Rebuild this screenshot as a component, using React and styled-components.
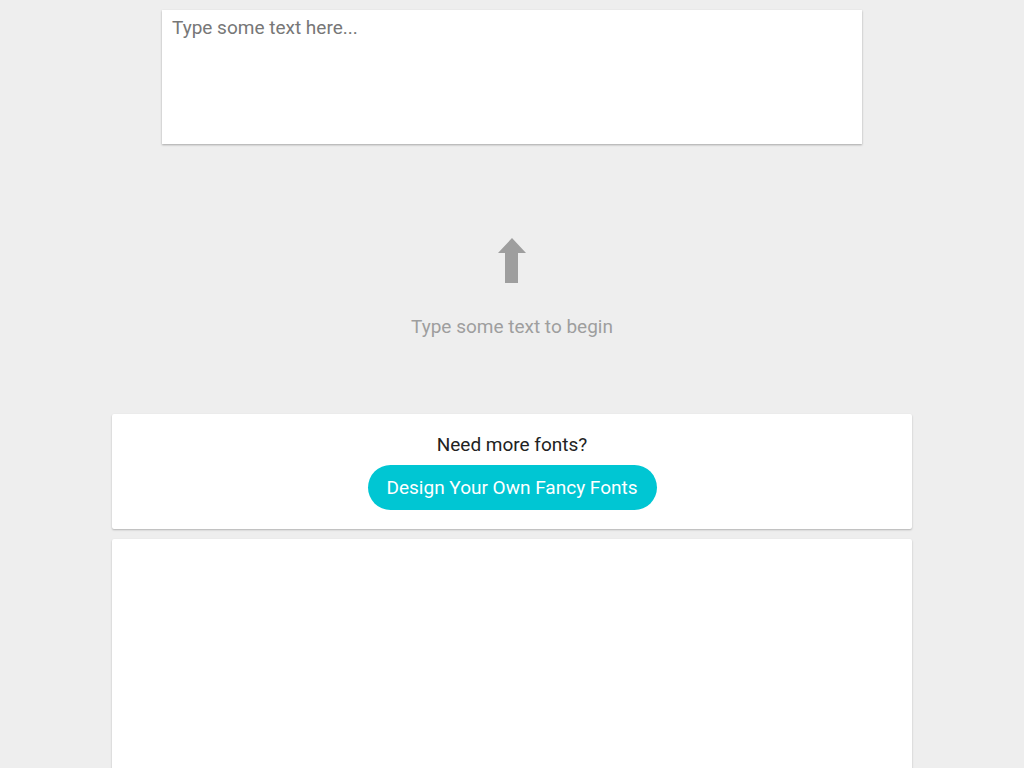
import React from 'react';
import styled, { createGlobalStyle } from 'styled-components';

const GlobalStyle = createGlobalStyle`
  html, body {
    margin: 0;
    padding: 0;
    background: #eeeeee;
    font-family: Roboto, "Liberation Sans", sans-serif;
  }
  * { box-sizing: border-box; }
`;

const Page = styled.div`
  display: flex;
  flex-direction: column;
  align-items: center;
  padding-top: 10px;
`;

const Input = styled.textarea`
  display: block;
  width: 700px;
  height: 134px;
  padding: 7px 10px;
  border: none;
  outline: none;
  resize: none;
  background: #fff;
  box-shadow: 0 1px 2px rgba(0, 0, 0, 0.3);
  font-family: Roboto, "Liberation Sans", sans-serif;
  font-size: 19px;
  line-height: 22px;
  color: #333;

  &::placeholder {
    color: #777;
  }
`;

const Empty = styled.div`
  display: flex;
  flex-direction: column;
  align-items: center;
  padding: 94px 0 76px;
  color: #9e9e9e;
`;

const Arrow = styled.svg`
  display: block;
  width: 30px;
  height: 46px;
`;

const Hint = styled.div`
  margin-top: 32px;
  font-size: 19px;
  line-height: 22px;
`;

const Card = styled.div`
  width: 800px;
  background: #fff;
  box-shadow: 0 1px 2px rgba(0, 0, 0, 0.25);
  border-radius: 2px;
  margin-bottom: 10px;
  ${p => p.$tall && 'min-height: 260px;'}
`;

const Promo = styled(Card)`
  display: flex;
  flex-direction: column;
  align-items: center;
  padding: 20px 0 19px;
`;

const PromoTitle = styled.div`
  font-size: 19px;
  line-height: 22px;
  color: #222;
`;

const PromoButton = styled.a`
  display: inline-flex;
  align-items: center;
  justify-content: center;
  margin-top: 9px;
  height: 45px;
  padding: 0 19px;
  border-radius: 23px;
  background: #00c6d3;
  color: #fff;
  font-size: 19px;
  text-decoration: none;
  cursor: pointer;
`;

export default function App() {
  return (
    <>
      <GlobalStyle />
      <Page>
        <Input placeholder="Type some text here..." />
        <Empty>
          <Arrow viewBox="0 0 30 46">
            <path d="M15 0 L29 15 L21 15 L21 45 L8 45 L8 15 L1 15 Z" fill="#9e9e9e" />
          </Arrow>
          <Hint>Type some text to begin</Hint>
        </Empty>
        <Promo>
          <PromoTitle>Need more fonts?</PromoTitle>
          <PromoButton>Design Your Own Fancy Fonts</PromoButton>
        </Promo>
        <Card $tall />
      </Page>
    </>
  );
}
